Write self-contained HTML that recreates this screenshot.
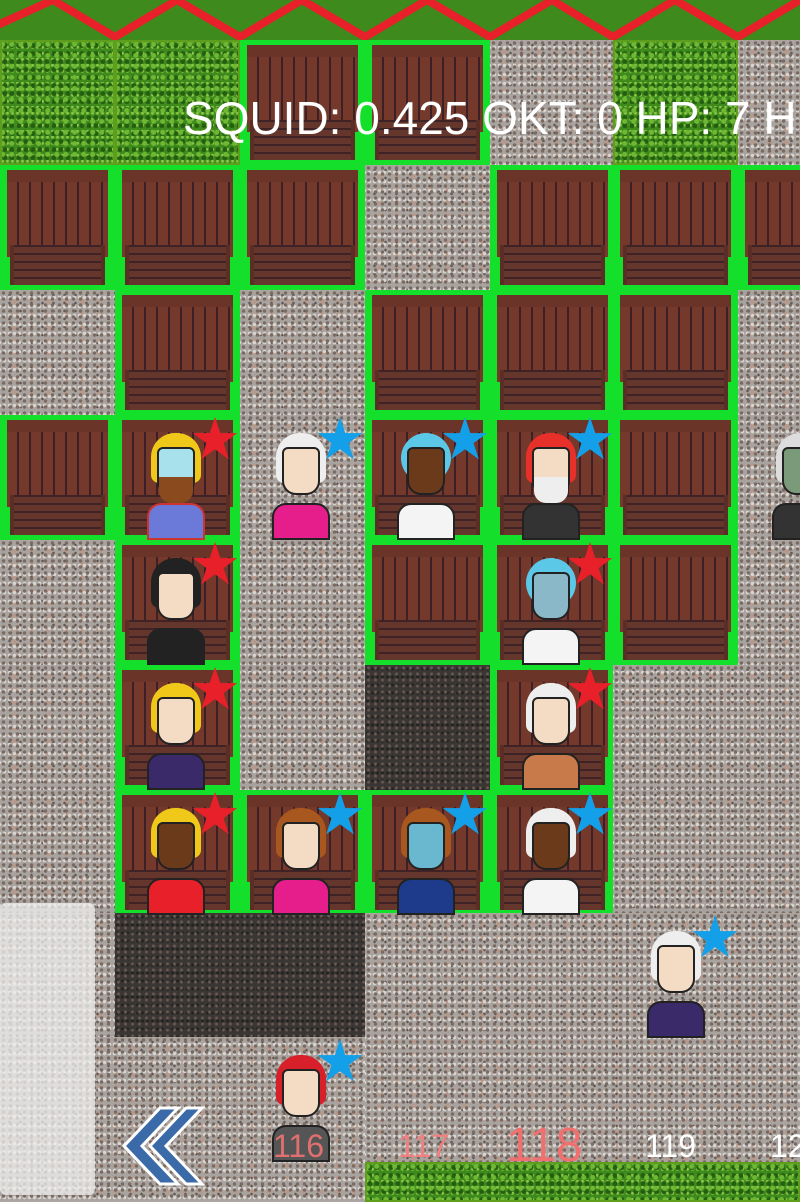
<!DOCTYPE html><html><head><meta charset="utf-8"><style>
*{margin:0;padding:0;box-sizing:border-box}
body{width:800px;height:1200px;overflow:hidden;position:relative;background:#aaa5a2;font-family:"Liberation Sans",sans-serif}
.t{position:absolute;width:125px;height:125px}
.g{background:#3e8a1c;background-image:radial-gradient(circle at 30% 40%,#6fb834 0 2px,transparent 3px),radial-gradient(circle at 70% 70%,#245e10 0 2px,transparent 3px),radial-gradient(circle at 50% 20%,#8cc848 0 1px,transparent 2px);background-size:9px 11px,7px 8px,5px 6px;box-shadow:inset 0 0 0 2px #5e9e1c}
.s{background:#a9a3a0;background-image:radial-gradient(circle,#7a6a62 0 1.5px,transparent 2px),radial-gradient(circle,#d8d4d0 0 1.5px,transparent 2px),radial-gradient(circle,#5e5652 0 1px,transparent 1.5px),radial-gradient(circle,#b89888 0 2px,transparent 2.5px);background-size:7px 6px,5px 9px,11px 8px,17px 13px;background-position:0 0,2px 3px,4px 1px,6px 5px}
.d{background:#3a3633;background-image:radial-gradient(circle,#6a5a52 0 1px,transparent 2px),radial-gradient(circle,#222 0 1px,transparent 2px);background-size:7px 6px,5px 8px}
.h{background:#14e02c}
.h::before{content:"";position:absolute;left:7px;right:7px;top:5px;height:75px;background:repeating-linear-gradient(90deg,#74392b 0 10px,#3b2028 10px 12px);border-top:12px solid #6a3528}
.h::after{content:"";position:absolute;left:10px;right:10px;top:80px;bottom:5px;background:repeating-linear-gradient(0deg,#65362b 0 6px,#3e2225 6px 8px);border-left:4px solid #5a2e25;border-right:4px solid #5a2e25}
.c{position:absolute;width:80px;height:125px}
.hair{position:absolute;left:16px;top:18px;width:50px;height:50px;border-radius:24px 24px 8px 8px}
.face{position:absolute;left:22px;top:32px;width:38px;height:48px;border-radius:6px 6px 14px 14px;background:#f4dcc4;border:2px solid #222}
.body{position:absolute;left:12px;top:88px;width:58px;height:37px;border-radius:14px 14px 0 0;border:2px solid #222}
.star{position:absolute;font-size:58px;line-height:58px;left:54px;top:-4px}
.txt{position:absolute;color:#fff;white-space:nowrap}
</style></head><body>
<svg style="position:absolute;left:0;top:0" width="800" height="40">
<rect width="800" height="40" fill="#3e8a1c"/>
<polyline points="-10,26 -9,28 53,0 115,37 177,0 240,37 302,0 365,37 427,0 490,37 552,0 613,37 675,0 738,37 800,0" fill="none" stroke="#e8202a" stroke-width="8"/>
</svg>
<div class="t g" style="left:0;top:40px;width:115px"></div>
<div class="t g" style="left:115px;top:40px"></div>
<div class="t h" style="left:240px;top:40px"></div>
<div class="t h" style="left:365px;top:40px"></div>
<div class="t s" style="left:490px;top:40px"></div>
<div class="t g" style="left:613px;top:40px"></div>
<div class="t s" style="left:738px;top:40px"></div>
<div class="t h" style="left:0;top:165px;width:115px"></div>
<div class="t h" style="left:115px;top:165px"></div>
<div class="t h" style="left:240px;top:165px"></div>
<div class="t s" style="left:365px;top:165px"></div>
<div class="t h" style="left:490px;top:165px"></div>
<div class="t h" style="left:613px;top:165px"></div>
<div class="t h" style="left:738px;top:165px"></div>
<div class="t s" style="left:0;top:290px;width:115px"></div>
<div class="t h" style="left:115px;top:290px"></div>
<div class="t s" style="left:240px;top:290px"></div>
<div class="t h" style="left:365px;top:290px"></div>
<div class="t h" style="left:490px;top:290px"></div>
<div class="t h" style="left:613px;top:290px"></div>
<div class="t s" style="left:738px;top:290px"></div>
<div class="t h" style="left:0;top:415px;width:115px"></div>
<div class="t h" style="left:115px;top:415px"></div>
<div class="t s" style="left:240px;top:415px"></div>
<div class="t h" style="left:365px;top:415px"></div>
<div class="t h" style="left:490px;top:415px"></div>
<div class="t h" style="left:613px;top:415px"></div>
<div class="t s" style="left:738px;top:415px"></div>
<div class="t s" style="left:0;top:540px;width:115px"></div>
<div class="t h" style="left:115px;top:540px"></div>
<div class="t s" style="left:240px;top:540px"></div>
<div class="t h" style="left:365px;top:540px"></div>
<div class="t h" style="left:490px;top:540px"></div>
<div class="t h" style="left:613px;top:540px"></div>
<div class="t s" style="left:738px;top:540px"></div>
<div class="t s" style="left:0;top:665px;width:115px"></div>
<div class="t h" style="left:115px;top:665px"></div>
<div class="t s" style="left:240px;top:665px"></div>
<div class="t d" style="left:365px;top:665px"></div>
<div class="t h" style="left:490px;top:665px"></div>
<div class="t s" style="left:613px;top:665px"></div>
<div class="t s" style="left:738px;top:665px"></div>
<div class="t s" style="left:0;top:790px;width:115px"></div>
<div class="t h" style="left:115px;top:790px"></div>
<div class="t h" style="left:240px;top:790px"></div>
<div class="t h" style="left:365px;top:790px"></div>
<div class="t h" style="left:490px;top:790px"></div>
<div class="t s" style="left:613px;top:790px"></div>
<div class="t s" style="left:738px;top:790px"></div>
<div class="t s" style="left:0;top:913px;width:115px"></div>
<div class="t d" style="left:115px;top:913px;width:250px"></div>
<div class="t s" style="left:365px;top:913px;width:435px;height:250px"></div>
<div class="t s" style="left:0;top:1037px;width:365px;height:163px"></div>
<div class="t g" style="left:365px;top:1162px;width:435px;height:40px"></div>
<div style="position:absolute;left:0;top:903px;width:95px;height:292px;background:rgba(240,240,240,.75);border-radius:6px"></div>

<div class="c" style="left:135px;top:415px"><div class="hair" style="background:#f0c81a"></div><div class="face" style="background:#a8e0ec"></div><div style="position:absolute;left:24px;top:62px;width:34px;height:26px;background:#8a4a1e;border-radius:0 0 12px 12px"></div><div class="body" style="background:#6b7ad8;border-color:#c33"></div><div class="star" style="color:#e8202a">★</div></div>
<div class="c" style="left:260px;top:415px"><div class="hair" style="background:#eee"></div><div class="face"></div><div class="body" style="background:#e61e8c"></div><div class="star" style="color:#14a0e8">★</div></div>
<div class="c" style="left:385px;top:415px"><div class="hair" style="background:#5cc8e8;border-radius:30px"></div><div class="face" style="background:#6b3a1a"></div><div class="body" style="background:#f4f4f4"></div><div class="star" style="color:#14a0e8">★</div></div>
<div class="c" style="left:510px;top:415px"><div class="hair" style="background:#e8302a"></div><div class="face"></div><div style="position:absolute;left:24px;top:62px;width:34px;height:26px;background:#eee;border-radius:0 0 12px 12px"></div><div class="body" style="background:#333"></div><div class="star" style="color:#14a0e8">★</div></div>
<div class="c" style="left:760px;top:415px"><div class="hair" style="background:#ddd"></div><div class="face" style="background:#7a9a7a"></div><div class="body" style="background:#333"></div></div>
<div class="c" style="left:135px;top:540px"><div class="hair" style="background:#222"></div><div class="face"></div><div class="body" style="background:#222"></div><div class="star" style="color:#e8202a">★</div></div>
<div class="c" style="left:510px;top:540px"><div class="hair" style="background:#5cc8e8;border-radius:30px"></div><div class="face" style="background:#8ab8c8"></div><div class="body" style="background:#f4f4f4"></div><div class="star" style="color:#e8202a">★</div></div>
<div class="c" style="left:135px;top:665px"><div class="hair" style="background:#f0c81a"></div><div class="face"></div><div class="body" style="background:#3a2a6a"></div><div class="star" style="color:#e8202a">★</div></div>
<div class="c" style="left:510px;top:665px"><div class="hair" style="background:#eee"></div><div class="face"></div><div class="body" style="background:#c87a4a"></div><div class="star" style="color:#e8202a">★</div></div>
<div class="c" style="left:135px;top:790px"><div class="hair" style="background:#f0c81a"></div><div class="face" style="background:#6b3a1a"></div><div class="body" style="background:#e8202a"></div><div class="star" style="color:#e8202a">★</div></div>
<div class="c" style="left:260px;top:790px"><div class="hair" style="background:#a8581e"></div><div class="face"></div><div class="body" style="background:#e61e8c"></div><div class="star" style="color:#14a0e8">★</div></div>
<div class="c" style="left:385px;top:790px"><div class="hair" style="background:#a8581e"></div><div class="face" style="background:#6ab8d0"></div><div class="body" style="background:#1e3a8a"></div><div class="star" style="color:#14a0e8">★</div></div>
<div class="c" style="left:510px;top:790px"><div class="hair" style="background:#eee"></div><div class="face" style="background:#6b3a1a"></div><div class="body" style="background:#f4f4f4"></div><div class="star" style="color:#14a0e8">★</div></div>
<div class="c" style="left:635px;top:913px"><div class="hair" style="background:#eee"></div><div class="face"></div><div class="body" style="background:#3a2a6a"></div><div class="star" style="color:#14a0e8">★</div></div>
<div class="c" style="left:260px;top:1037px"><div class="hair" style="background:#d8202a"></div><div class="face"></div><div class="body" style="background:#555"></div><div class="star" style="color:#14a0e8">★</div></div>

<div class="txt" style="left:183px;top:91px;font-size:46px">SQUID: 0.425 OKT: 0 HP: 7 H</div>
<svg style="position:absolute;left:120px;top:1105px" width="85" height="82"><g fill="#3a6aa8" stroke="#fff" stroke-width="3"><polygon points="40,3 58,3 22,41 58,79 40,79 4,41"/><polygon points="66,3 82,3 46,41 82,79 66,79 30,41"/></g></svg>
<div class="txt" style="left:273px;top:1128px;font-size:32px;color:#e07070">116</div>
<div class="txt" style="left:398px;top:1128px;font-size:32px;color:#f08080">117</div>
<div class="txt" style="left:506px;top:1118px;font-size:48px;color:#f07070">118</div>
<div class="txt" style="left:645px;top:1128px;font-size:32px">119</div>
<div class="txt" style="left:770px;top:1128px;font-size:32px">12</div>
</body></html>
